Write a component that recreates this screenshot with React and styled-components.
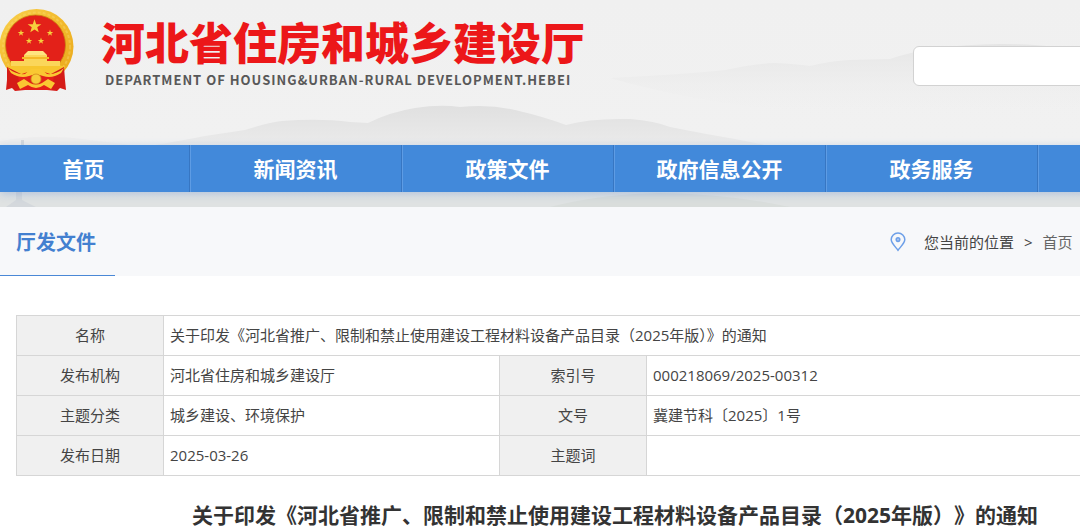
import styled, { createGlobalStyle } from 'styled-components';

const navItems = ['首页', '新闻资讯', '政策文件', '政府信息公开', '政务服务'];

const docTitle = '关于印发《河北省推广、限制和禁止使用建设工程材料设备产品目录（2025年版）》的通知';

const infoRows = [
  ['发布机构', '河北省住房和城乡建设厅', '索引号', '000218069/2025-00312'],
  ['主题分类', '城乡建设、环境保护', '文号', '冀建节科〔2025〕1号'],
  ['发布日期', '2025-03-26', '主题词', ''],
];

const GlobalStyle = createGlobalStyle`
  * {
    box-sizing: border-box;
  }

  body {
    margin: 0;
    background: #fff;
    color: #444;
    font-family: 'Open Sans', 'Noto Sans CJK SC', sans-serif;
    font-size: 15px;
    line-height: 24px;
    overflow-x: hidden;
  }

  a {
    color: inherit;
    text-decoration: none;
  }
`;

const Page = styled.div`
  min-width: 1230px;
`;

const Header = styled.header`
  position: relative;
  padding-bottom: 15px;
  background: linear-gradient(#f0f0f0, #f1f1f1 140px, #dfe2e2 200px);
`;

const Scenery = styled.svg`
  position: absolute;
  top: 0;
  left: 0;
  width: 1230px;
  height: 207px;
`;

const Masthead = styled.div`
  position: relative;
  display: grid;
  grid-template-columns: 1fr 317px;
  height: 145px;
`;

const Brand = styled.a`
  display: flex;
  gap: 25px;
  padding-top: 8px;
`;

const BrandName = styled.div`
  padding-top: 8px;
  font-family: 'Noto Sans CJK SC', sans-serif;
`;

const SiteName = styled.h1`
  margin: 0;
  color: #ec1719;
  font-size: 44px;
  font-weight: 900;
  line-height: 50px;
  white-space: nowrap;
`;

const SiteNameEn = styled.p`
  margin: 0;
  padding-left: 4px;
  color: #585858;
  font-size: 13px;
  font-weight: 700;
  letter-spacing: 1px;
  line-height: 28px;
  white-space: nowrap;
`;

const SearchInput = styled.input`
  width: 300px;
  height: 40px;
  margin-top: 46px;
  padding: 0 12px;
  border: 1px solid #d2d2d2;
  border-radius: 6px;
  background: #fff;
  font: inherit;
  outline: none;
`;

const Nav = styled.nav`
  position: relative;
  background: #4289da;
  box-shadow: 0 2px 8px rgba(66, 120, 200, 0.3);
`;

const NavList = styled.ul`
  display: flex;
  margin: 0 0 0 -22px;
  padding: 0;
  list-style: none;
`;

const NavItem = styled.li`
  width: 212px;
  border-right: 1px solid #3776c2;
  box-shadow: 1px 0 0 #5e9ce4;
`;

const NavLink = styled.a`
  display: block;
  color: #fff;
  font-family: 'Noto Sans CJK SC', sans-serif;
  font-size: 21px;
  font-weight: 700;
  line-height: 47px;
  text-align: center;
`;

const TitleBar = styled.div`
  display: grid;
  grid-template-columns: 1fr 340px;
  background: #f7f8fa;
`;

const SectionTitle = styled.h2`
  justify-self: start;
  width: 115px;
  margin: 0;
  padding: 4px 0 0 16px;
  border-bottom: 1px solid #4a88d6;
  color: #4380d0;
  font-size: 20px;
  font-weight: 700;
  line-height: 64px;
`;

const Breadcrumb = styled.nav`
  display: flex;
  align-items: center;
  gap: 10px;
`;

const PinIcon = styled.svg`
  width: 16px;
  height: 20px;
  margin-right: 8px;
`;

const HomeLink = styled.a`
  color: #666;
`;

const Content = styled.main`
  padding: 39px 16px 0;
`;

const InfoTable = styled.table`
  width: 100%;
  border-collapse: collapse;
  table-layout: fixed;
`;

const LabelCell = styled.th`
  height: 40px;
  padding: 0 0 2px;
  border: 1px solid #d6d6d6;
  background: #f0f0f0;
  font-weight: 400;
`;

const ValueCell = styled.td`
  height: 40px;
  padding: 0 6px 2px;
  border: 1px solid #d6d6d6;
`;

const DocTitle = styled.h2`
  margin: 22px 0 0;
  color: #333;
  font-size: 21px;
  font-weight: 700;
  line-height: 34px;
  text-align: center;
  text-spacing-trim: space-all;
  white-space: nowrap;
`;

const starPath = 'M0 -10L2.4 -3.2L9.5 -3.1L3.8 1.2L5.9 8.1L0 4L-5.9 8.1L-3.8 1.2L-9.5 -3.1L-2.4 -3.2Z';

const smallStars = [
  [21, 25],
  [50, 25],
  [29, 33],
  [41, 33],
];

function Emblem() {
  return (
    <svg width="76" height="86" viewBox="0 0 76 86" aria-hidden="true">
      <defs>
        <linearGradient id="gold" x1="0" y1="0" x2="1" y2="1">
          <stop offset="0" stopColor="#f9d14f" />
          <stop offset="0.5" stopColor="#f2b92b" />
          <stop offset="1" stopColor="#e9a81c" />
        </linearGradient>
      </defs>
      <ellipse cx="36.5" cy="38.5" rx="37" ry="37.5" fill="url(#gold)" />
      <ellipse cx="36.5" cy="38.5" rx="33.5" ry="34" fill="none" stroke="#fbe07a" strokeWidth="2" strokeDasharray="3 2" opacity="0.35" />
      <circle cx="35.5" cy="37" r="30" fill="#e32119" stroke="#c98512" strokeWidth="0.8" />
      <path d="M7 59Q20 54 35.5 54Q52 54 65 59L60 66L36 72L12 66Z" fill="#f7c62f" />
      <path d="M7 59L21 66L20 75L25 82L15 83L12 80L6 82L7 72Z" fill="#d51b17" />
      <path d="M64 59L51 66L52 75L47 82L57 83L60 80L66 82L65 72Z" fill="#d51b17" />
      <path d="M18 68Q36 58 54 68L52 82H20Z" fill="#e32119" />
      <path d="M8 60Q16 67 25 66L31 61H41L47 66Q56 67 64 60L61 65Q52 71 43 68L36 66L29 68Q20 71 11 65Z" fill="#fac832" />
      <path d="M24 71L30 75Q36 78 42 75L48 71L55 75L51 81L44 77Q36 83 28 77L20 81L17 75Z" fill="#fac832" />
      <path d="M11 53H60V58H11Z" fill="#fbd65a" />
      <path d="M24 47H47V53H24Z" fill="#fbd65a" />
      <path d="M26 45L28 43H43L45 45L47 47H24Z" fill="#ffe481" />
      <path d="M22 49H49V51H22Z" fill="#f5b928" />
      <circle cx="36" cy="71" r="5" fill="#f8cc3a" stroke="#d4911c" strokeWidth="0.8" />
      <path d={starPath} transform="translate(34.5 18.5) scale(.72)" fill="#f6cf3e" />
      {smallStars.map(([x, y]) => (
        <path key={`${x}-${y}`} d={starPath} transform={`translate(${x} ${y}) scale(.34)`} fill="#f6cf3e" />
      ))}
    </svg>
  );
}

function Mountains() {
  return (
    <Scenery viewBox="0 0 1230 207" preserveAspectRatio="none" aria-hidden="true">
      <defs>
        <linearGradient id="ridge" x1="0" y1="0" x2="0" y2="1">
          <stop offset="0" stopColor="#e0e0e0" />
          <stop offset="1" stopColor="#ebebeb" />
        </linearGradient>
        <linearGradient id="farRidge" x1="0" y1="0" x2="0" y2="1">
          <stop offset="0" stopColor="#e5e5e5" />
          <stop offset="1" stopColor="#f0f0f0" stopOpacity="0" />
        </linearGradient>
      </defs>
      <path
        d="M610 78Q690 74 725 70Q752 64 775 63Q795 64 810 66Q830 61 850 60L890 59Q930 45 1000 44Q1060 44 1090 54L1230 70V115H820Q700 104 610 78Z"
        fill="url(#farRidge)"
      />
      <path
        d="M155 145Q185 140 205 136L245 130Q270 122 282 121Q320 118 350 122L368 123Q390 112 415 108Q440 104 460 107Q490 104 515 110Q545 117 566 125Q590 118 630 119Q655 121 670 127Q705 134 735 139L775 147H155Z"
        fill="url(#ridge)"
      />
      <path d="M0 145V141Q45 133 90 140L130 145Z" fill="#ededed" />
      <path d="M21 140H24V145H21ZM16 192H22V200L36 207H6L16 200Z" fill="#d4d8dc" />
      <path d="M550 207Q600 194 660 193Q730 194 790 207Z" fill="#d9dddb" />
    </Scenery>
  );
}

export default function App() {
  return (
    <Page>
      <GlobalStyle />
      <Header>
        <Mountains />
        <Masthead>
          <Brand href="#">
            <Emblem />
            <BrandName>
              <SiteName>河北省住房和城乡建设厅</SiteName>
              <SiteNameEn>DEPARTMENT OF HOUSING&amp;URBAN-RURAL DEVELOPMENT.HEBEI</SiteNameEn>
            </BrandName>
          </Brand>
          <SearchInput type="search" aria-label="搜索" />
        </Masthead>
        <Nav>
          <NavList>
            {navItems.map((item) => (
              <NavItem key={item}>
                <NavLink href="#">{item}</NavLink>
              </NavItem>
            ))}
          </NavList>
        </Nav>
      </Header>

      <TitleBar>
        <SectionTitle>厅发文件</SectionTitle>
        <Breadcrumb>
          <PinIcon viewBox="0 0 16 20" fill="none" stroke="#6d9fe8" strokeWidth="1.5" aria-hidden="true">
            <path d="M8 18.2C5.8 15.2 1.2 11.3 1.2 7.6A6.8 6.6 0 0 1 14.8 7.6C14.8 11.3 10.2 15.2 8 18.2Z" />
            <circle cx="8" cy="7.6" r="1.8" fill="#a9c6f2" />
          </PinIcon>
          <span>您当前的位置</span>
          <span>&gt;</span>
          <HomeLink href="#">首页</HomeLink>
        </Breadcrumb>
      </TitleBar>

      <Content>
        <InfoTable>
          <colgroup>
            <col width="147" />
            <col width="336" />
            <col width="147" />
            <col />
          </colgroup>
          <tbody>
            <tr>
              <LabelCell scope="row">名称</LabelCell>
              <ValueCell colSpan={3}>{docTitle}</ValueCell>
            </tr>
            {infoRows.map(([label, value, label2, value2]) => (
              <tr key={label}>
                <LabelCell scope="row">{label}</LabelCell>
                <ValueCell>{value}</ValueCell>
                <LabelCell scope="row">{label2}</LabelCell>
                <ValueCell>{value2}</ValueCell>
              </tr>
            ))}
          </tbody>
        </InfoTable>
        <DocTitle>{docTitle}</DocTitle>
      </Content>
    </Page>
  );
}
